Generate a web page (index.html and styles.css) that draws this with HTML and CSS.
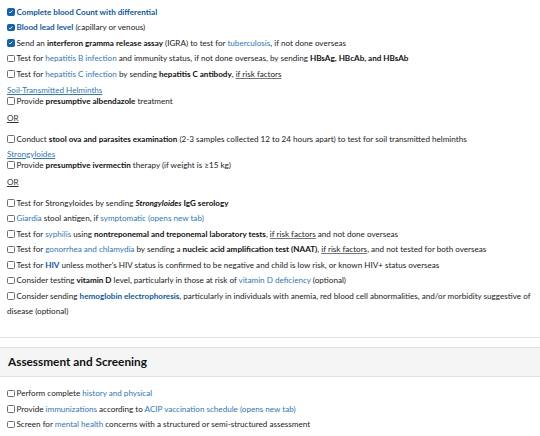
FILE: index.html
```html
<!DOCTYPE html>
<html lang="en">
<head>
    <meta charset="UTF-8">
    <meta name="viewport" content="width=device-width, initial-scale=1.0">
    <title>Screening checklist</title>
    <link rel="stylesheet" href="styles.css">
</head>
<body>
    <div class="checklist">
        <div class="item"><span class="box checked"><svg viewBox="0 0 8 8"><path d="M1.6 4.2 L3.2 5.8 L6.4 2.2"/></svg></span><a class="strong-link" href="#">Complete blood Count with differential</a></div>
        <div class="item"><span class="box checked"><svg viewBox="0 0 8 8"><path d="M1.6 4.2 L3.2 5.8 L6.4 2.2"/></svg></span><a class="strong-link" href="#">Blood lead level</a> (capillary or venous)</div>
        <div class="item"><span class="box checked"><svg viewBox="0 0 8 8"><path d="M1.6 4.2 L3.2 5.8 L6.4 2.2"/></svg></span>Send an <b>interferon gramma release assay</b> (IGRA) to test for <a href="#">tuberculosis</a>, if not done overseas</div>
        <div class="item"><span class="box"></span>Test for <a href="#">hepatitis B infection</a> and immunity status, if not done overseas, by sending <b>HBsAg, HBcAb, and HBsAb</b></div>
        <div class="item"><span class="box"></span>Test for <a href="#">hepatitis C infection</a> by sending <b>hepatitis C antibody</b>, <span class="under">if risk factors</span></div>

        <div class="subhead first"><a href="#">Soil-Transmitted Helminths</a></div>
        <div class="item tight"><span class="box"></span>Provide <b>presumptive albendazole</b> treatment</div>
        <div class="or">OR</div>
        <div class="item after-or"><span class="box"></span>Conduct <b>stool ova and parasites examination</b> (2-3 samples collected 12 to 24 hours apart) to test for soil transmitted helminths</div>

        <div class="subhead"><a href="#">Strongyloides</a></div>
        <div class="item tight"><span class="box"></span>Provide <b>presumptive ivermectin</b> therapy (if weight is ≥15 kg)</div>
        <div class="or">OR</div>
        <div class="item after-or"><span class="box"></span>Test for Strongyloides by sending <b><i>Strongyloides</i> IgG serology</b></div>

        <div class="item"><span class="box"></span><a href="#">Giardia</a> stool antigen, if <a href="#">symptomatic (opens new tab)</a></div>
        <div class="item"><span class="box"></span>Test for <a href="#">syphilis</a> using <b>nontreponemal and treponemal laboratory tests</b>, <span class="under">if risk factors</span> and not done overseas</div>
        <div class="item"><span class="box"></span>Test for <a href="#">gonorrhea and chlamydia</a> by sending a <b>nucleic acid amplification test (NAAT)</b>, <span class="under">if risk factors</span>, and not tested for both overseas</div>
        <div class="item"><span class="box"></span>Test for <a class="strong-link" href="#">HIV</a> unless mother's HIV status is confirmed to be negative and child is low risk, or known HIV+ status overseas</div>
        <div class="item"><span class="box"></span>Consider testing <b>vitamin D</b> level, particularly in those at risk of <a href="#">vitamin D deficiency</a> (optional)</div>
        <div class="item"><span class="box"></span>Consider sending <a class="strong-link" href="#">hemoglobin electrophoresis</a>, particularly in individuals with anemia, red blood cell abnormalities, and/or morbidity suggestive of disease (optional)</div>
    </div>

    <hr class="divider">

    <div class="section-head">
        <h2>Assessment and Screening</h2>
    </div>

    <div class="checklist lower">
        <div class="item"><span class="box"></span>Perform complete <a href="#">history and physical</a></div>
        <div class="item"><span class="box"></span>Provide <a href="#">immunizations</a> according to <a href="#">ACIP vaccination schedule (opens new tab)</a></div>
        <div class="item"><span class="box"></span>Screen for <a href="#">mental health</a> concerns with a structured or semi-structured assessment</div>
    </div>
</body>
</html>
```

FILE: styles.css
```css
body {
    margin: 0;
    font-family: Lato, "Open Sans", sans-serif;
    font-size: 8.1px;
    color: #222;
    background: #fff;
}
.checklist {
    padding: 4.5px 3px 0 7px;
}
.checklist.lower {
    padding-top: 9.5px;
}
.item {
    line-height: 15px;
    margin-bottom: 0.5px;
}
.item.tight {
    margin-top: -2px;
}
.item.after-or {
    margin-top: 8px;
}
.box {
    display: inline-block;
    box-sizing: border-box;
    width: 7.5px;
    height: 7.5px;
    border: 1px solid #6e6e6e;
    border-radius: 1.5px;
    margin-right: 2px;
    vertical-align: -1px;
    background: #fff;
}
.box.checked {
    background: #0f62b8;
    border-color: #0f62b8;
}
.box svg {
    display: block;
    width: 5.5px;
    height: 5.5px;
    fill: none;
    stroke: #fff;
    stroke-width: 1.4;
}
a {
    color: #2b78c5;
    text-decoration: none;
}
a.strong-link {
    color: #0b58a8;
    font-weight: 700;
}
b {
    color: #111;
}
.under {
    text-decoration: underline;
    text-decoration-color: #777;
}
.subhead {
    line-height: 11px;
    margin-top: 2px;
}
.subhead.first {
    margin-top: 3px;
}
.subhead a {
    text-decoration: underline;
}
.or {
    line-height: 11px;
    margin-top: 4px;
    text-decoration: underline;
    color: #333;
}
.divider {
    border: none;
    border-top: 1px solid #e4e4e4;
    margin: 18px 0 0 0;
}
.section-head {
    margin-top: 9px;
    height: 30px;
    box-sizing: border-box;
    background: #f5f5f5;
    border-top: 1px solid #e2e2e2;
    border-bottom: 1px solid #e2e2e2;
    display: flex;
    align-items: center;
    padding-left: 8px;
}
.section-head h2 {
    margin: 0;
    font-size: 11.8px;
    font-weight: 700;
    color: #111;
}
```
